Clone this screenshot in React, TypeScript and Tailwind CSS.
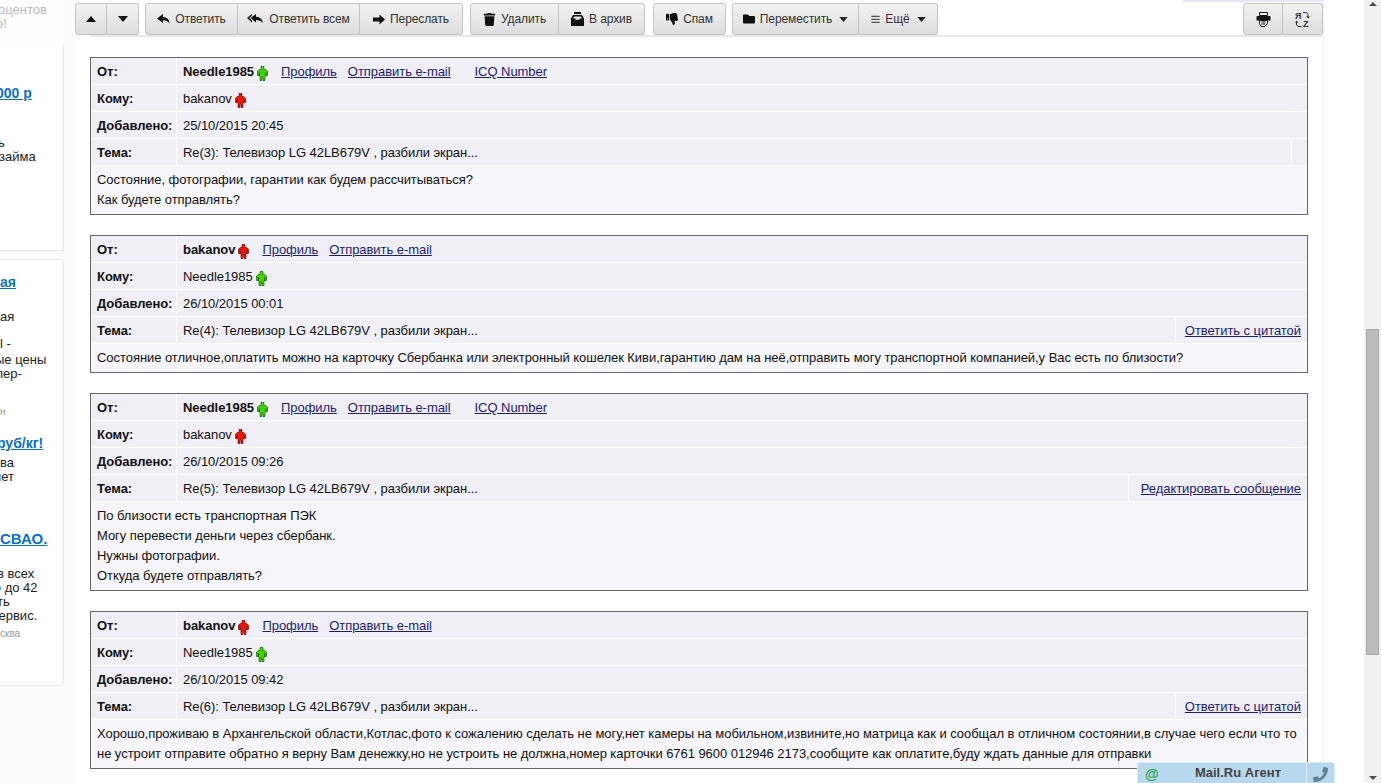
import React from 'react';
import { FaTrash, FaThumbsDown, FaFolder, FaPhoneAlt } from 'react-icons/fa';

function Man({ color, dark }: { color: string; dark: string }) {
  return (
    <svg width="11" height="15" viewBox="0 0 11 15" className="inline-block shrink-0">
      <path d="M4 .5h3v3h1.500l2 1.500v4.500H9V6.500h-.5v3.500H8v4.500H6v-3.500H5v3.500H3V10h-.5V6.500H2v3H.5V5l2-1.500H4z" fill={color} stroke={dark} strokeWidth=".6" />
    </svg>
  );
}

function Tri({ dir, w = 10, h = 6, color = '#111' }: { dir: 'up' | 'down'; w?: number; h?: number; color?: string }) {
  return (
    <svg width={w} height={h} viewBox="0 0 10 6" className="shrink-0">
      <path d={dir === 'up' ? 'M5 0l5 6H0z' : 'M0 0h10L5 6z'} fill={color} />
    </svg>
  );
}

function ReplyIcon() {
  return (
    <svg width="13" height="11" viewBox="0 0 13 11" className="shrink-0">
      <path d="M6 0L0 4.500 6 9V6.200c3 0 5 1 6.500 3.300C12.300 5.500 10 3.200 6 3z" fill="#111" />
    </svg>
  );
}

function ReplyAllIcon() {
  return (
    <svg width="17" height="11" viewBox="0 0 17 11" className="shrink-0">
      <path d="M5 0L0 4 5 8.500V6.800L2.300 4 5 1.700z" fill="#111" />
      <path d="M9 0L3.500 4 9 8.500V6c3 0 5.500 .6 7 3.300C15.800 5.500 13 3 9 2.800z" fill="#111" />
    </svg>
  );
}

function ForwardIcon() {
  return (
    <svg width="12" height="11" viewBox="0 0 12 11" className="shrink-0">
      <path d="M6.500 .5L12 5.500 6.500 10.500V7.500H0v-4h6.500z" fill="#111" />
    </svg>
  );
}

function ArchiveIcon() {
  return (
    <svg width="13" height="14" viewBox="0 0 13 14" className="shrink-0">
      <path d="M3 0h7v2H3zM2 3h9l2 3.500V14H0V6.500z" fill="#111" />
      <path d="M3 4.500h7l.8 2H8.500v1.300h-4V6.500H2.200z" fill="#e8e8e8" />
    </svg>
  );
}

function PrintIcon() {
  return (
    <svg width="15" height="15" viewBox="0 0 15 15" className="shrink-0">
      <path d="M3.500 .5h8v3h-8z" fill="#eee" stroke="#111" />
      <path d="M1 4h13a1 1 0 0 1 .5 1v3.500H.5V5z" fill="#111" />
      <path d="M3.500 8.500h8v3L9 14.500H5l-1.500-3z" fill="#eee" stroke="#111" />
      <path d="M5.500 10h4M5.500 12h4" stroke="#111" />
    </svg>
  );
}

function SwapIcon() {
  return (
    <svg width="15" height="17" viewBox="0 0 15 17" fill="none" style={{ fontFamily: '"Liberation Sans", sans-serif' }}>
      <text x="0" y="8" fontSize="9" fontWeight="bold" fill="#333">Я</text>
      <text x="8" y="16" fontSize="9" fontWeight="bold" fill="#333">Z</text>
      <path d="M8 1.500h2.500c1.500 0 2.500 1 2.500 2.500v2.500" stroke="#333" />
      <path d="M11 5.500l2 2 2-2" fill="#333" />
      <path d="M6.500 15.500H4c-1.500 0-2.500-1-2.500-2.500v-2.500" stroke="#333" />
      <path d="M0 11.500l1.500-2 2 2" fill="#333" />
    </svg>
  );
}

function Btn({ w, icon, label, caret, first, last }: { w: string; icon?: React.ReactNode; label?: string; caret?: boolean; first?: boolean; last?: boolean }) {
  return (
    <div className={`${w} h-[32px] flex items-center justify-center gap-[5px] border border-[#c4c4c4] bg-gradient-to-b from-[#f2f2f2] to-[#dedede] text-[12px] tracking-[-0.1px] text-[#333] ${first ? 'rounded-l-[3px]' : 'border-l-0'} ${last ? 'rounded-r-[3px]' : ''}`}>
      {icon}
      {label && <span>{label}</span>}
      {caret && <span className="ml-[2px] flex"><Tri dir="down" w={9} h={5} color="#222" /></span>}
    </div>
  );
}

function Link({ children, className = '' }: { children: React.ReactNode; className?: string }) {
  return <span className={`underline text-[#1c1c73] ${className}`}>{children}</span>;
}

function Row({ label, children, extra }: { label: string; children: React.ReactNode; extra?: React.ReactNode }) {
  return (
    <div className="flex h-[27px] border-b border-white bg-[#efeff5]">
      <div className="w-[86px] pl-[6px] pt-[2px] font-bold flex items-center border-r border-white whitespace-nowrap">{label}</div>
      <div className="flex-1 pl-[6px] pt-[2px] flex items-center">{children}</div>
      {extra}
    </div>
  );
}

type Msg = { from: string; to: string; date: string; subject: string; fromGreen: boolean; icq?: boolean; extra?: React.ReactNode; body: string[] };

const green = ['#3fd400', '#0c4a00'];
const red = ['#ee1408', '#5a0000'];

const messages: Msg[] = [
  { from: 'Needle1985', to: 'bakanov', fromGreen: true, date: '25/10/2015 20:45', subject: 'Re(3): Телевизор LG 42LB679V , разбили экран...', icq: true,
    extra: <div className="w-[16px] border-l border-white" />,
    body: ['Состояние, фотографии, гарантии как будем рассчитываться?', 'Как будете отправлять?'] },
  { from: 'bakanov', to: 'Needle1985', fromGreen: false, date: '26/10/2015 00:01', subject: 'Re(4): Телевизор LG 42LB679V , разбили экран...',
    extra: <div className="w-[132px] pt-[2px] border-l border-white flex items-center justify-end pr-[6px]"><Link>Ответить с цитатой</Link></div>,
    body: ['Состояние отличное,оплатить можно на карточку Сбербанка или электронный кошелек Киви,гарантию дам на неё,отправить могу транспортной компанией,у Вас есть по близости?'] },
  { from: 'Needle1985', to: 'bakanov', fromGreen: true, date: '26/10/2015 09:26', subject: 'Re(5): Телевизор LG 42LB679V , разбили экран...', icq: true,
    extra: <div className="w-[179px] pt-[2px] border-l border-white flex items-center justify-end pr-[6px]"><Link>Редактировать сообщение</Link></div>,
    body: ['По близости есть транспортная ПЭК', 'Могу перевести деньги через сбербанк.', 'Нужны фотографии.', 'Откуда будете отправлять?'] },
  { from: 'bakanov', to: 'Needle1985', fromGreen: false, date: '26/10/2015 09:42', subject: 'Re(6): Телевизор LG 42LB679V , разбили экран...',
    extra: <div className="w-[132px] pt-[2px] border-l border-white flex items-center justify-end pr-[6px]"><Link>Ответить с цитатой</Link></div>,
    body: ['Хорошо,проживаю в Архангельской области,Котлас,фото к сожалению сделать не могу,нет камеры на мобильном,извините,но матрица как и сообщал в отличном состоянии,в случае чего если что то', 'не устроит отправите обратно я верну Вам денежку,но не устроить не должна,номер карточки 6761 9600 012946 2173,сообщите как оплатите,буду ждать данные для отправки'] },
];

function Message({ m }: { m: Msg }) {
  const f = m.fromGreen ? green : red;
  const t = m.fromGreen ? red : green;
  return (
    <div className="border border-[#666] text-[13px] tracking-[-0.05px] leading-[20px] text-[#111]">
      <Row label="От:">
        <span className="font-bold">{m.from}</span>
        <span className="ml-[3px] mr-[13px] mt-[3px] flex"><Man color={f[0]} dark={f[1]} /></span>
        <Link>Профиль</Link>
        <Link className="ml-[11px]">Отправить e-mail</Link>
        {m.icq && <Link className="ml-[24px]">ICQ Number</Link>}
      </Row>
      <Row label="Кому:">
        <span>{m.to}</span>
        <span className="ml-[3px] mt-[3px] flex"><Man color={t[0]} dark={t[1]} /></span>
      </Row>
      <Row label="Добавлено:">{m.date}</Row>
      <Row label="Тема:" extra={m.extra}>{m.subject}</Row>
      <div className="bg-[#f5f5fa] pl-[6px] pt-[4px] pb-[4px]">
        {m.body.map((b, i) => <div key={i} className="whitespace-nowrap">{b}</div>)}
      </div>
    </div>
  );
}

function Line({ t = '', text, kind = 'text' }: { t?: string; text: string; kind?: 'text' | 'head' | 'headLg' | 'muted' | 'small' }) {
  const styles = {
    text: 'text-[13px] text-[#222]',
    head: 'text-[14px] font-bold underline text-[#0a70c8]',
    headLg: 'text-[15px] font-bold underline text-[#0a70c8]',
    muted: 'text-[13px] text-[#bbb]',
    small: 'text-[10px] text-[#999]',
  };
  return <div className={`${t} h-[14px] leading-[14px] whitespace-nowrap ${styles[kind]}`}>{text}</div>;
}

export default function App() {
  return (
    <div className="flex h-[783px] w-[1381px] overflow-hidden bg-white" style={{ fontFamily: '"Liberation Sans", Arial, sans-serif' }}>
      {/* left adverts, cut off by the scroll position */}
      <aside className="w-[75px] shrink-0 bg-[#fbfbfb] overflow-hidden">
        <div className="w-[64px] h-[45px] bg-[#fdfdfd] overflow-hidden">
          <Line t="mt-[3px] -ml-[2px]" text="оцентов" kind="muted" />
          <Line t="-ml-[4px]" text="о!" kind="muted" />
        </div>
        <div className="w-[64px] h-[206px] bg-white border-r border-b border-[#e8e8e8] rounded-br-[3px] overflow-hidden">
          <Line t="mt-[41px] -ml-[4px]" text="000 р" kind="head" />
          <Line t="mt-[36px] -ml-[2px]" text="ь" />
          <Line t="-ml-[1px]" text="займа" />
        </div>
        <div className="mt-[8px] w-[64px] h-[427px] bg-white border-r border-b border-t border-[#e8e8e8] rounded-r-[3px] overflow-hidden">
          <Line t="mt-[15px]" text="ая" kind="head" />
          <Line t="mt-[21px]" text="ая" />
          <Line t="mt-[13px]" text="l -" />
          <Line t="mt-[2px] -ml-[5px]" text="ые цены" />
          <Line t="-ml-[4px]" text="пер-" />
          <Line t="mt-[24px]" text="н" kind="small" />
          <Line t="mt-[17px] -ml-[3px]" text="руб/кг!" kind="head" />
          <Line t="mt-[6px]" text="ва" />
          <Line t="-ml-[6px]" text="нет" />
          <Line t="mt-[48px]" text="СВАО." kind="headLg" />
          <Line t="mt-[21px] -ml-[3px]" text="в всех" />
          <Line t="-ml-[12px]" text="ко до 42" />
          <Line t="-ml-[3px]" text="ть" />
          <Line t="-ml-[8px]" text="сервис." />
          <Line t="mt-[4px]" text="сква" kind="small" />
        </div>
      </aside>

      {/* main panel */}
      <main className="w-[1249px] shrink-0 border-r border-[#f0f0f0]">
        <div className="h-[3px] flex justify-end">
          <div className="w-[140px] h-[2px] bg-[#e4e8f4]" />
        </div>
        <div className="flex h-[34px] border-b-[2px] border-[#e8e8e8] ml-[15px]">
          <div className="flex items-start -ml-[15px]">
            <div className="flex mr-[6px]">
              <Btn first w="w-[32px]" icon={<Tri dir="up" />} />
              <Btn last w="w-[32px]" icon={<Tri dir="down" />} />
            </div>
            <div className="flex mr-[7px]">
              <Btn first w="w-[93px]" icon={<ReplyIcon />} label="Ответить" />
              <Btn w="w-[122px]" icon={<ReplyAllIcon />} label="Ответить всем" />
              <Btn last w="w-[103px]" icon={<ForwardIcon />} label="Переслать" />
            </div>
            <div className="flex mr-[8px]">
              <Btn first w="w-[89px]" icon={<FaTrash size={13} className="text-[#111]" />} label="Удалить" />
              <Btn last w="w-[86px]" icon={<ArchiveIcon />} label="В архив" />
            </div>
            <div className="flex mr-[6px]">
              <Btn first last w="w-[73px]" icon={<FaThumbsDown size={12} className="text-[#111]" />} label="Спам" />
            </div>
            <div className="flex">
              <Btn first w="w-[127px]" icon={<FaFolder size={12} className="text-[#111]" />} label="Переместить" caret />
              <Btn last w="w-[79px]" icon={<span className="text-[17px] font-light text-[#555] leading-none">≡</span>} label="Ещё" caret />
            </div>
          </div>
          <div className="flex ml-auto items-start">
            <Btn first w="w-[40px]" icon={<PrintIcon />} />
            <Btn last w="w-[40px]" icon={<SwapIcon />} />
          </div>
        </div>
        <div className="ml-[15px] w-[1218px] mt-[20px] flex flex-col gap-[20px]">
          {messages.map((m, i) => <Message key={i} m={m} />)}
        </div>
      </main>

      <div className="flex-1" />

      {/* page scrollbar */}
      <div className="w-[17px] shrink-0 bg-[#f1f1f1] flex flex-col items-center">
        <div className="w-0 h-0 mt-[2px] border-x-[4px] border-x-transparent border-b-[4px] border-b-[#505050]" />
        <div className="w-[13px] h-[326px] mt-[323px] bg-[#bcbcbc] border border-[#a8a8a8]" />
        <div className="mt-auto mb-[3px] w-0 h-0 border-x-[4px] border-x-transparent border-t-[4px] border-t-[#505050]" />
      </div>

      {/* fixed Mail.Ru Agent bar */}
      <div className="fixed left-[1137px] top-[762px] w-[198px] h-[21px] flex bg-[#b8d8ee] rounded-t-[4px] border-t border-x border-[#d8e8f4]">
        <div className="flex-1 flex items-center relative">
          <span className="absolute left-[7px] top-[1px] text-[14px] leading-[20px] font-bold text-[#1fa845]">@</span>
          <span className="w-full text-center text-[13px] font-bold text-[#444] pl-[32px]">Mail.Ru Агент</span>
        </div>
        <div className="w-[28px] border-l border-[#e4f0f8] flex items-center justify-center">
          <FaPhoneAlt size={15} className="text-[#5f8296] scale-x-[-1] mt-[3px]" />
        </div>
      </div>
    </div>
  );
}
